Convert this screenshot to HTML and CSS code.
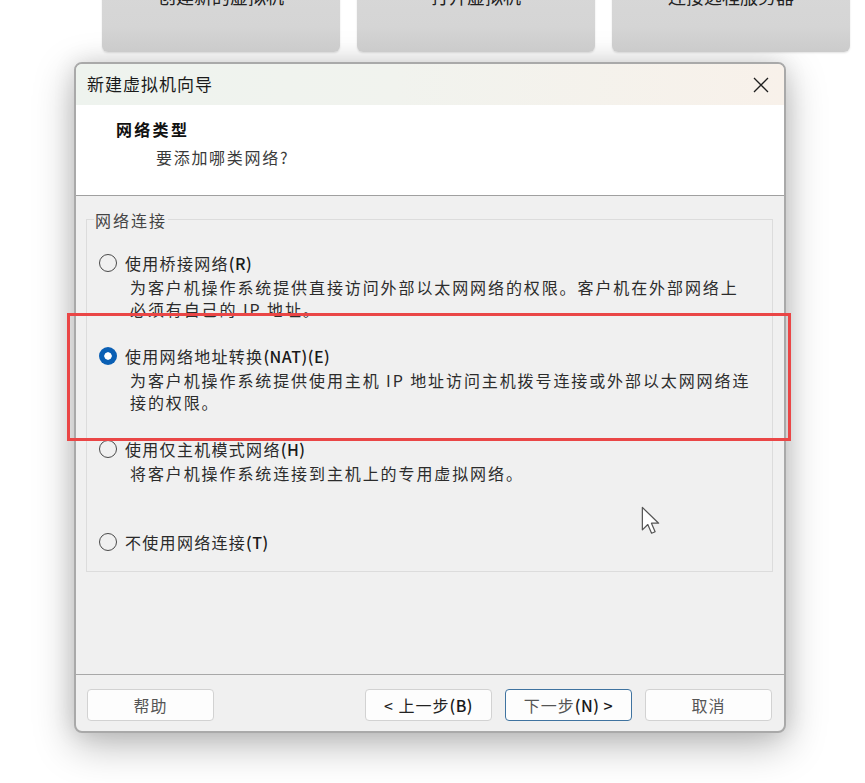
FILE: index.html
```html
<!DOCTYPE html>
<html lang="zh-CN">
<head>
<meta charset="utf-8">
<title>新建虚拟机向导</title>
<link rel="stylesheet" href="styles.css">
</head>
<body>
<div class="tiles">
  <div class="tile">创建新的虚拟机</div>
  <div class="tile">打开虚拟机</div>
  <div class="tile">连接远程服务器</div>
</div>

<div class="dialog">
  <div class="titlebar">
    <span class="title">新建虚拟机向导</span>
    <svg class="close" width="16" height="16" viewBox="0 0 16 16"><path d="M1 1 L15 15 M15 1 L1 15" stroke="#1e1e1e" stroke-width="1.3" fill="none"/></svg>
  </div>
  <div class="header">
    <div class="h-title">网络类型</div>
    <div class="h-sub">要添加哪类网络?</div>
  </div>
  <div class="content">
    <div class="group">
      <div class="legend">网络连接</div>
      <div class="options">
        <div class="option">
          <div class="opt-row"><span class="radio"></span><span class="opt-label">使用桥接网络<b>(R)</b></span></div>
          <div class="opt-desc">为客户机操作系统提供直接访问外部以太网网络的权限。客户机在外部网络上<br>必须有自己的 IP 地址。</div>
        </div>
        <div class="option">
          <div class="opt-row"><span class="radio checked"></span><span class="opt-label">使用网络地址转换<b>(NAT)(E)</b></span></div>
          <div class="opt-desc">为客户机操作系统提供使用主机 IP 地址访问主机拨号连接或外部以太网网络连<br>接的权限。</div>
        </div>
        <div class="option">
          <div class="opt-row"><span class="radio"></span><span class="opt-label">使用仅主机模式网络<b>(H)</b></span></div>
          <div class="opt-desc">将客户机操作系统连接到主机上的专用虚拟网络。</div>
        </div>
        <div class="option last">
          <div class="opt-row"><span class="radio"></span><span class="opt-label">不使用网络连接<b>(T)</b></span></div>
        </div>
      </div>
    </div>
  </div>
  <div class="footer">
    <button class="btn">帮助</button>
    <button class="btn back">&lt; 上一步<b>(B)</b></button>
    <button class="btn next">下一步<b>(N) &gt;</b></button>
    <button class="btn">取消</button>
  </div>
</div>

<div class="highlight"></div>
<svg class="cursor" width="19" height="28" viewBox="0 0 14 20.5"><path d="M1 1 L1 17.5 L5 13.6 L7.8 20 L10.4 18.9 L7.7 12.6 L13 12.6 Z" fill="#fff" stroke="#555" stroke-width="0.9" stroke-linejoin="round"/></svg>
</body>
</html>
```

FILE: styles.css
```css
* { box-sizing: border-box; }
html, body { margin: 0; padding: 0; }
body {
  width: 865px;
  height: 783px;
  overflow: hidden;
  position: relative;
  background: #ffffff;
  font-family: "Noto Sans CJK SC", "Noto Sans", sans-serif;
}

.tiles {
  display: flex;
  gap: 17px;
  margin: -50px 0 0 102px;
}
.tile {
  width: 238px;
  height: 102px;
  border-radius: 6px;
  background: linear-gradient(#dadada, #d5d5d5 75%, #cbcbcb);
  box-shadow: 0 1px 2px rgba(0,0,0,0.12);
  text-align: center;
  padding-top: 34px;
  font-size: 18px;
  line-height: 24px;
  color: #222;
}

.dialog {
  margin: 10px 0 0 74px;
  width: 712px;
  height: 671px;
  border: 2px solid #a9a9a9;
  border-radius: 8px;
  overflow: hidden;
  background: #f0f0f0;
  display: flex;
  flex-direction: column;
  box-shadow: 0 12px 40px rgba(0,0,0,0.28), 0 0 22px rgba(0,0,0,0.10);
}

.titlebar {
  height: 41px;
  flex: none;
  display: flex;
  align-items: center;
  padding: 0 15px 0 11px;
  background: linear-gradient(90deg, #eef3ee 0%, #f1f3ee 45%, #f8f1ea 100%);
}
.title {
  font-size: 17px;
  letter-spacing: 1px;
  color: #1a1a1a;
  line-height: 22px;
  margin-top: -2px;
}
.close { margin-left: auto; }

.header {
  height: 91px;
  flex: none;
  background: #ffffff;
  border-bottom: 1px solid #a0a0a0;
  padding: 13px 0 0 40px;
}
.h-title {
  font-size: 16px;
  font-weight: bold;
  letter-spacing: 2.3px;
  line-height: 22px;
  color: #111;
}
.h-sub {
  margin: 6px 0 0 40px;
  font-size: 16px;
  letter-spacing: 1.7px;
  line-height: 22px;
  color: #3a3a3a;
}

.content {
  flex: 1;
  padding: 23px 11px 0 10px;
}
.group {
  border: 1px solid #dcdcdc;
}
.legend {
  width: fit-content;
  margin: -11px 0 0 7px;
  padding: 0 1px;
  background: #f0f0f0;
  font-size: 16px;
  letter-spacing: 2px;
  line-height: 22px;
  color: #444;
}
.options {
  padding: 21px 0 18px 12px;
}
.option { height: 93px; }
.option.last { height: 22px; }
.opt-row {
  display: flex;
  align-items: center;
  height: 22px;
}
.radio {
  width: 18px;
  height: 18px;
  border-radius: 50%;
  border: 1.3px solid #4a4a4a;
  margin-right: 8px;
  flex: none;
}
.radio.checked {
  border: none;
  background: radial-gradient(circle, #ffffff 0 3.4px, #0a5fb4 4px);
}
.opt-label {
  font-size: 16px;
  letter-spacing: 1.3px;
  line-height: 22px;
  color: #2a2a2a;
}
.opt-label b, .btn b {
  font-weight: 500;
  letter-spacing: 0.5px;
  color: #1a1a1a;
}
.opt-desc {
  margin-top: 2px;
  padding-left: 31px;
  font-size: 16px;
  letter-spacing: 1.9px;
  line-height: 22px;
  color: #2c2c2c;
  white-space: nowrap;
}

.footer {
  height: 57px;
  flex: none;
  border-top: 1px solid #a8a8a8;
  padding: 14px 12px 0 11px;
  display: flex;
  align-items: flex-start;
  gap: 13px;
}
.btn {
  width: 127px;
  height: 32px;
  border: 1px solid #d2d2d2;
  border-radius: 4px;
  background: #fdfdfd;
  font-family: "Noto Sans CJK SC", "Noto Sans", sans-serif;
  font-size: 16px;
  letter-spacing: 1px;
  color: #555;
  padding: 0;
}
.btn.back { margin-left: auto; color: #222; }
.btn.next { border: 1.5px solid #3f73a0; color: #555; }

.highlight {
  position: absolute;
  left: 67px;
  top: 313px;
  width: 724px;
  height: 128px;
  border: 3px solid #ea4646;
}
.cursor {
  position: absolute;
  left: 641px;
  top: 506px;
}
```
